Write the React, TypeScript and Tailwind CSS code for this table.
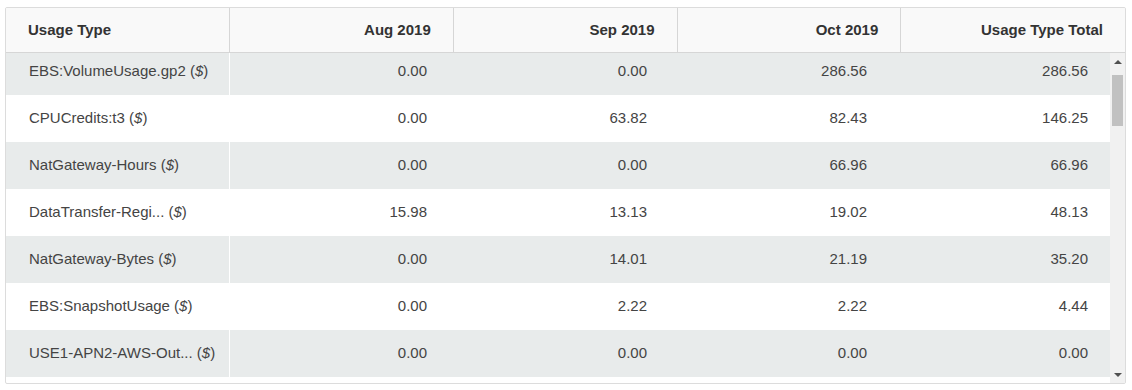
import React from 'react';

type Row = { name: string; aug: string; sep: string; oct: string; total: string };

const ROWS: Row[] = [
  { name: 'EBS:VolumeUsage.gp2', aug: '0.00', sep: '0.00', oct: '286.56', total: '286.56' },
  { name: 'CPUCredits:t3', aug: '0.00', sep: '63.82', oct: '82.43', total: '146.25' },
  { name: 'NatGateway-Hours', aug: '0.00', sep: '0.00', oct: '66.96', total: '66.96' },
  { name: 'DataTransfer-Regi...', aug: '15.98', sep: '13.13', oct: '19.02', total: '48.13' },
  { name: 'NatGateway-Bytes', aug: '0.00', sep: '14.01', oct: '21.19', total: '35.20' },
  { name: 'EBS:SnapshotUsage', aug: '0.00', sep: '2.22', oct: '2.22', total: '4.44' },
  { name: 'USE1-APN2-AWS-Out...', aug: '0.00', sep: '0.00', oct: '0.00', total: '0.00' },
];

const headers = ['Aug 2019', 'Sep 2019', 'Oct 2019', 'Usage Type Total'];

// classic scrollbar, drawn since the headless browser hides its own
const ScrollBar = () => (
  <div className="w-[15px] shrink-0 bg-[#f1f1f1] flex flex-col items-center">
    <div className="h-[15px] w-full flex items-center justify-center pt-[2px]">
      <div className="w-0 h-0 border-l-[4px] border-r-[4px] border-b-[4px] border-l-transparent border-r-transparent border-b-[#505050]" />
    </div>
    <div className="mt-[7px] w-[11px] h-[51px] bg-[#c1c1c1]" />
    <div className="flex-1" />
    <div className="h-[15px] w-full flex items-center justify-center pb-[2px]">
      <div className="w-0 h-0 border-l-[4px] border-r-[4px] border-t-[4px] border-l-transparent border-r-transparent border-t-[#505050]" />
    </div>
  </div>
);

export default function App() {
  return (
    <div className="bg-white w-[1132px] h-[390px] pt-[7px] pl-[5px]" style={{ fontFamily: '"Liberation Sans", Arial, sans-serif' }}>
      <div className="w-[1121px] h-[377px] border border-[#dcdcdc] rounded-[2px] flex flex-col overflow-hidden">
        {/* header */}
        <div className="grid grid-cols-[224px_1fr_1fr_1fr_1fr] h-[45px] shrink-0 bg-[#f9f9f9] border-b border-[#d6d6d6] text-[15px] font-bold text-[#333]">
          <div className="flex items-center pl-[22px] border-r border-[#d6d6d6]">Usage Type</div>
          {headers.map((h, i) => (
            <div
              key={h}
              className={`flex items-center justify-end pr-[22px] ${i < 3 ? 'border-r border-[#d6d6d6]' : ''}`}
            >
              {h}
            </div>
          ))}
        </div>

        {/* body */}
        <div className="flex-1 flex min-h-0">
          <div className="flex-1 overflow-hidden text-[15px] text-[#444]">
            <div className="-mt-[5px]">
              {ROWS.map((r, i) => (
                <div
                  key={i}
                  className={`grid grid-cols-[224px_1fr_1fr_1fr_1fr] h-[47px] ${i % 2 === 0 ? 'bg-[#e8ebeb]' : 'bg-white'}`}
                >
                  <div className="flex items-center pl-[23px] border-r border-white whitespace-nowrap">
                    {r.name}&nbsp;(<span className="italic">$</span>)
                  </div>
                  <div className="flex items-center justify-end pr-[23px]">{r.aug}</div>
                  <div className="flex items-center justify-end pr-[23px]">{r.sep}</div>
                  <div className="flex items-center justify-end pr-[23px]">{r.oct}</div>
                  <div className="flex items-center justify-end pr-[22px]">{r.total}</div>
                </div>
              ))}
            </div>
          </div>
          <ScrollBar />
        </div>
      </div>
    </div>
  );
}
